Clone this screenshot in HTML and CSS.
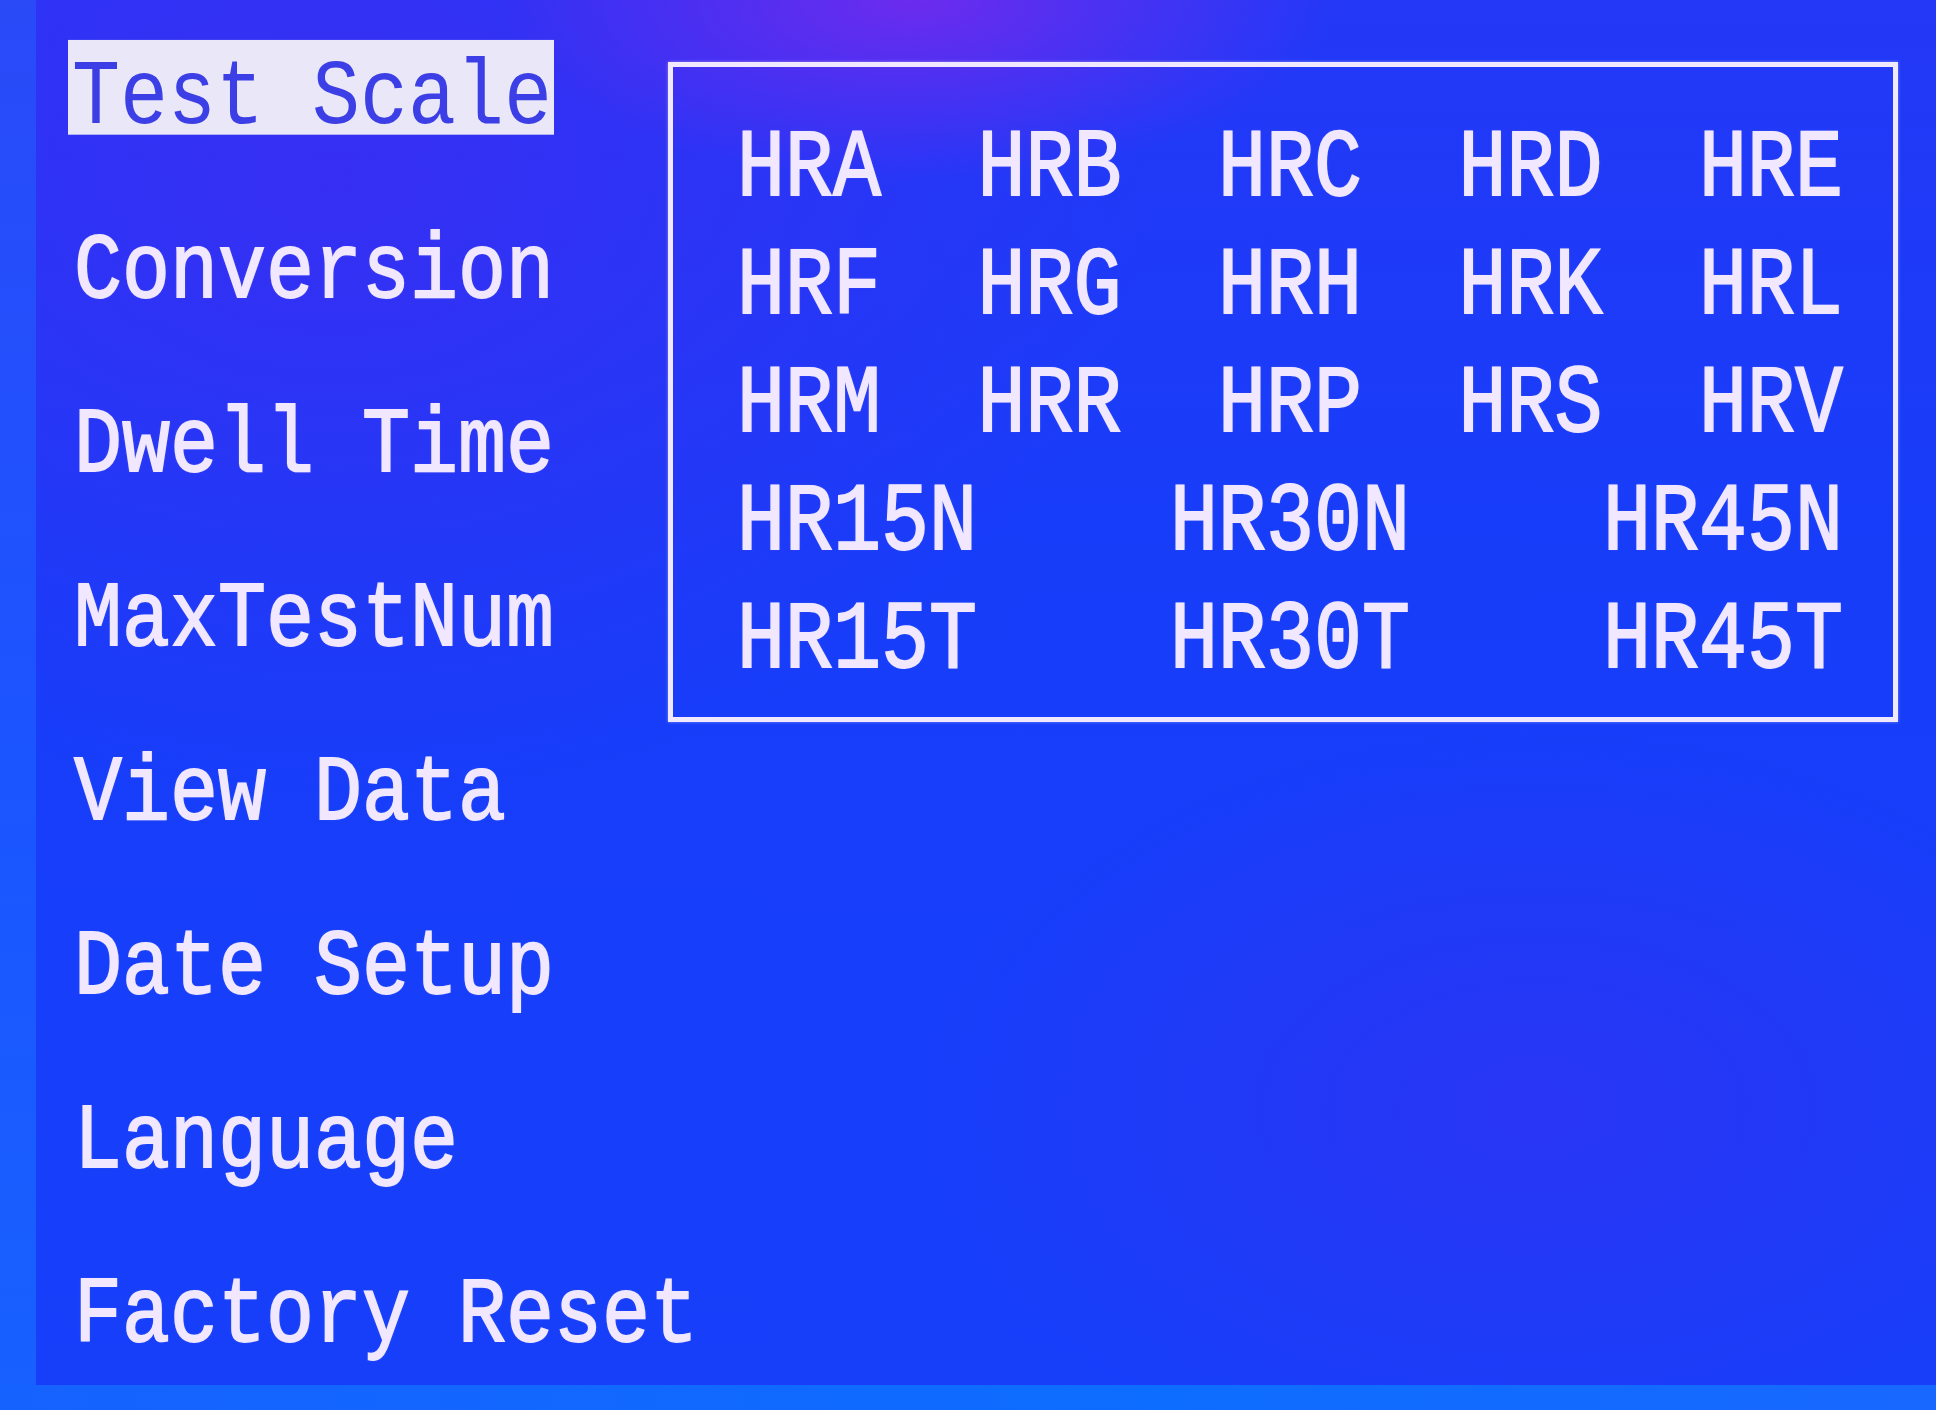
FILE: index.html
```html
<!DOCTYPE html>
<html lang="en">
<head>
  <meta charset="UTF-8" />
  <title>Test Scale - Hardness Tester</title>
  <link rel="stylesheet" href="styles.css">
</head>
<body>
  <div class="frame">
    <div class="bezel-left"></div>
    <div class="screen">
      <ul class="menu">
        <li><span class="selected">Test Scale</span></li>
        <li>Conversion</li>
        <li>Dwell Time</li>
        <li>MaxTestNum</li>
        <li>View Data</li>
        <li>Date Setup</li>
        <li>Language</li>
        <li>Factory Reset</li>
      </ul>

      <div class="scales">
        <div class="scale-row">
          <span>HRA</span><span>HRB</span><span>HRC</span><span>HRD</span><span>HRE</span>
        </div>
        <div class="scale-row">
          <span>HRF</span><span>HRG</span><span>HRH</span><span>HRK</span><span>HRL</span>
        </div>
        <div class="scale-row">
          <span>HRM</span><span>HRR</span><span>HRP</span><span>HRS</span><span>HRV</span>
        </div>
        <div class="scale-row">
          <span>HR15N</span><span>HR30N</span><span>HR45N</span>
        </div>
        <div class="scale-row">
          <span>HR15T</span><span>HR30T</span><span>HR45T</span>
        </div>
      </div>
    </div>
    <div class="bezel-bottom"></div>
  </div>
</body>
</html>
```

FILE: styles.css
```css
body {
  margin: 0;
  overflow: hidden;
  background: #1a3df9;
  font-family: 'Liberation Mono', 'Courier New', monospace;
  color: #f1e8ff;
}

.frame {
  width: 1936px;
  height: 1410px;
  display: grid;
  grid-template-columns: 36px 1fr;
  grid-template-rows: 1385px 25px;
}

/* lcd edges */
.bezel-left {
  background: linear-gradient(180deg, #2a4af8 0%, #1b55ff 55%, #1860ff 100%);
}
.bezel-bottom {
  grid-column: 1 / 3;
  background: linear-gradient(90deg, #1662ff, #0d6dff 60%, #1868ff);
}

.screen {
  display: grid;
  grid-template-columns: 632px 1230px;
  align-items: start;
  background:
    radial-gradient(ellipse 420px 180px at 880px 0px, rgba(130, 40, 235, 0.75), rgba(130, 40, 235, 0) 100%),
    radial-gradient(ellipse 820px 620px at 300px 180px, rgba(70, 40, 240, 0.6), rgba(70, 40, 240, 0) 100%),
    radial-gradient(ellipse 620px 380px at 1500px 1110px, rgba(60, 45, 240, 0.5), rgba(60, 45, 240, 0) 100%),
    linear-gradient(180deg, #2438f7 0%, #173df9 40%, #173ffa 100%);
}

/* left menu */
.menu {
  list-style: none;
  margin: 0;
  padding: 15px 0 0 38px;
}
.menu li {
  font-size: 80px;
  line-height: 174px;
  height: 174px;
  white-space: pre;
  -webkit-text-stroke: 1.5px #f1e8ff;
  transform: scaleY(1.17);
  transform-origin: 0 108px;
  text-shadow: 0 0 2px rgba(255, 255, 255, 0.35);
}
.menu .selected {
  display: inline-block;
  line-height: 62px;
  padding: 19px 2px 0 4px;
  margin-left: -6px;
  background: #e9e7f8;
  color: #3d3fe6;
  -webkit-text-stroke: 0;
  text-shadow: none;
}

/* scale selection box */
.scales {
  margin-top: 62px;
  height: 660px;
  box-sizing: border-box;
  border: 5px solid #efe8ff;
  padding: 48px 50px 0 64px;
  box-shadow: 0 0 3px rgba(255, 255, 255, 0.4);
}
.scale-row {
  display: flex;
  justify-content: space-between;
  font-size: 80px;
  line-height: 118px;
  height: 118px;
  -webkit-text-stroke: 1.5px #f1e8ff;
  transform: scaleY(1.2);
  transform-origin: 0 80px;
  text-shadow: 0 0 2px rgba(255, 255, 255, 0.35);
}
```
